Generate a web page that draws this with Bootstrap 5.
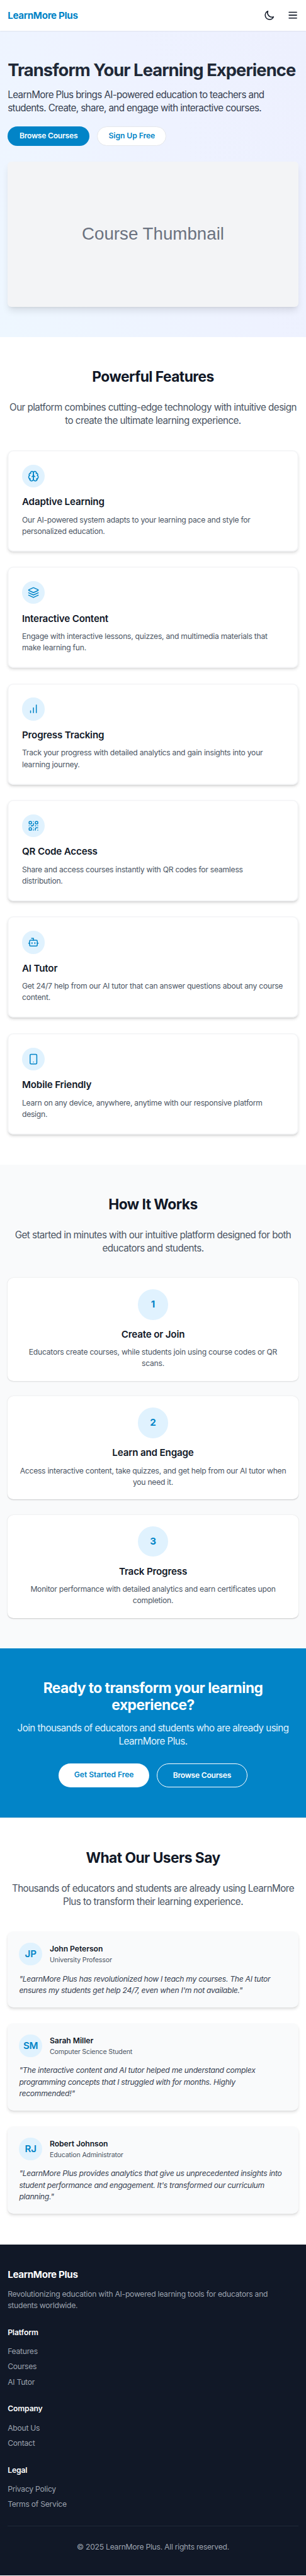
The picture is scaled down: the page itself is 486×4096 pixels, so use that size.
<!DOCTYPE html>
<html lang="en">
<head>
<meta charset="utf-8">
<meta name="viewport" content="width=device-width, initial-scale=1">
<title>LearnMore Plus</title>
<link href="https://cdn.jsdelivr.net/npm/bootstrap@5.3.0/dist/css/bootstrap.min.css" rel="stylesheet">
<style>
/* The whole page is sized in rem from this one root size */
html { font-size: 12.1588px; }
body { font-family: Inter, "Liberation Sans", sans-serif; color: #111827; background: #fff; line-height: 1.5; letter-spacing: -.021em; }
h1, h2, h3, h4, p, ul { margin: 0; }
a { text-decoration: none; }
.ico { width: 1.5rem; height: 1.5rem; fill: none; stroke: currentColor; stroke-width: 2; stroke-linecap: round; stroke-linejoin: round; display: block; }
.text-xl { font-size: 1.25rem; line-height: 1.75rem; letter-spacing: -.036em; }
.brand, .foot h3 { letter-spacing: -.022em; }
.brand { color: #0284c7; font-weight: 700; }
.topbar { height: 4rem; box-shadow: 0 .0625rem .1875rem rgba(0,0,0,.1), 0 .0625rem .125rem -.0625rem rgba(0,0,0,.1); position: relative; z-index: 1; background: #fff; }
.topbar .tools { gap: 1.5rem; }
.block { padding: 4rem 1rem; }
.hero { background: linear-gradient(65deg, #eef7ff, #eef2ff 60%, #edf0fe); }
.hero h1 { font-size: 2.25rem; line-height: 2.5rem; font-weight: 700; color: #1f2937; margin-bottom: 1rem; white-space: nowrap; letter-spacing: -.034em; }
.hero p { color: #374151; letter-spacing: -.04em; }
.pill { display: flex; justify-content: center; width: 10.6875rem; padding: .5rem 0; border-radius: 50rem; font-weight: 600; line-height: 1.5rem; white-space: nowrap; letter-spacing: -.005em; }
.pill.tight { letter-spacing: -.021em; }
.pill.narrow { width: 9.0625rem; }
.pill-lg { width: 11.8125rem; padding: .75rem 0; }
.pill-blue { background: #0284c7; color: #fff; }
.pill-white { background: #fff; color: #0284c7; }
.pill-edge { border: 1px solid #e5e7eb; padding: calc(.5625rem - 1px) 0; }
.pill-ghost { border: 1px solid #fff; color: #fff; padding: calc(.8125rem - 1px) 0; }
.thumb { height: 19rem; margin-top: 2rem; border-radius: .5rem; background: #f3f4f6; color: #6b7280; font: 2.28rem/1 "Liberation Sans", Arial, sans-serif; letter-spacing: 0; box-shadow: 0 .625rem .9375rem -.1875rem rgba(0,0,0,.1), 0 .25rem .375rem -.25rem rgba(0,0,0,.1); }
.title { font-size: 1.875rem; line-height: 2.25rem; font-weight: 700; letter-spacing: -.024em; }
.sub { color: #4b5563; margin: 2rem 0 3rem; }
.tile { border-radius: .75rem; background: #fff; padding: 1.5rem; }
.tile h3 { font-size: 1.25rem; line-height: 1.75rem; font-weight: 600; margin: 1rem 0 .75rem; letter-spacing: -.012em; }
.tile p { color: #4b5563; }
.stack { display: grid; gap: 2rem; }
.feature { padding: 1.875rem; box-shadow: inset 0 0 0 .125rem #f3f4f6, 0 .25rem .375rem -.0625rem rgba(0,0,0,.1), 0 .125rem .25rem -.125rem rgba(0,0,0,.1); }
.dot { width: 3rem; height: 3rem; border-radius: 50%; background: #e0f2fe; color: #0284c7; flex: none; display: flex; align-items: center; justify-content: center; font-size: 1.25rem; font-weight: 600; }
.dot-lg { width: 4rem; height: 4rem; font-weight: 700; }
.soft { background: #f9fafb; }
.step { box-shadow: 0 .0625rem .1875rem rgba(0,0,0,.1), 0 .0625rem .125rem -.0625rem rgba(0,0,0,.1); }
.cta { background: #0284c7; color: #fff; }
.cta p { color: #e0f2fe; margin: 1rem 0 2rem; }
.says { border-top: .0625rem solid #e5e7eb; }
.quote { background: #f9fafb; box-shadow: 0 .25rem .375rem -.0625rem rgba(0,0,0,.1), 0 .125rem .25rem -.125rem rgba(0,0,0,.1); }
.quote h4 { font-size: 1rem; line-height: 1.5rem; font-weight: 600; letter-spacing: -.004em; }
.quote .role { font-size: .875rem; line-height: 1.25rem; letter-spacing: -.015em; }
.quote .words { color: #374151; font-style: italic; letter-spacing: -.023em; }
.foot { background: #111827; color: #9ca3af; padding: 3rem 1rem; }
.foot h4 { font-size: 1rem; line-height: 1.5rem; font-weight: 600; color: #fff; margin: 2rem 0 1rem; letter-spacing: -.01em; }
.foot h3 { font-weight: 700; color: #fff; margin-bottom: 1rem; }
.foot a { color: inherit; display: block; }
.foot .links { display: grid; gap: .5rem; }
.legal { border-top: .0625rem solid #1f2937; margin-top: 2rem; padding-top: calc(2rem - .5px); }
</style>
</head>
<body>
<header class="topbar d-flex align-items-center justify-content-between px-3">
  <a href="#" class="brand text-xl">LearnMore Plus</a>
  <div class="tools d-flex align-items-center">
    <svg class="ico" viewBox="0 0 24 24"><path d="M20.354 15.354A9 9 0 018.646 3.646 9.003 9.003 0 0012 21a9.003 9.003 0 008.354-5.646z" transform="translate(-.1 0)"/></svg>
    <svg class="ico" viewBox="0 0 24 24"><path d="M4 6h16M4 12h16M4 18h16"/></svg>
  </div>
</header>

<main>
<section class="hero block">
  <h1>Transform Your Learning Experience</h1>
  <p class="text-xl mb-4">LearnMore Plus brings AI-powered education to teachers and students. Create, share, and engage with interactive courses.</p>
  <div class="d-flex gap-3">
    <a href="#" class="pill pill-blue tight">Browse Courses</a>
    <a href="#" class="pill pill-white pill-edge narrow">Sign Up Free</a>
  </div>
  <div class="thumb d-flex align-items-center justify-content-center">Course Thumbnail</div>
</section>

<section class="block">
  <div class="text-center">
    <h2 class="title">Powerful Features</h2>
    <p class="sub text-xl">Our platform combines cutting-edge technology with intuitive design to create the ultimate learning experience.</p>
  </div>
  <div class="stack">
    <div class="tile feature">
      <span class="dot"><svg class="ico" viewBox="0 0 24 24"><path d="M12 5a3 3 0 1 0-5.997.125 4 4 0 0 0-2.526 5.77 4 4 0 0 0 .556 6.588A4 4 0 1 0 12 18Z"/><path d="M12 5a3 3 0 1 1 5.997.125 4 4 0 0 1 2.526 5.77 4 4 0 0 1-.556 6.588A4 4 0 1 1 12 18Z"/><path d="M15 13a4.5 4.5 0 0 1-3-4 4.5 4.5 0 0 1-3 4M17.599 6.5a3 3 0 0 0 .399-1.375M6.003 5.125A3 3 0 0 0 6.401 6.5M3.477 10.896a4 4 0 0 1 .585-.396M19.938 10.5a4 4 0 0 1 .585.396M6 18a4 4 0 0 1-1.967-.516M19.967 17.484A4 4 0 0 1 18 18"/></svg></span>
      <h3>Adaptive Learning</h3>
      <p>Our AI-powered system adapts to your learning pace and style for personalized education.</p>
    </div>
    <div class="tile feature">
      <span class="dot"><svg class="ico" viewBox="0 0 24 24"><path d="m12.83 2.18a2 2 0 0 0-1.66 0L2.6 6.08a1 1 0 0 0 0 1.83l8.58 3.91a2 2 0 0 0 1.66 0l8.58-3.9a1 1 0 0 0 0-1.83Z"/><path d="m22 17.65-9.17 4.16a2 2 0 0 1-1.66 0L2 17.65M22 12.65l-9.17 4.16a2 2 0 0 1-1.66 0L2 12.65"/></svg></span>
      <h3>Interactive Content</h3>
      <p>Engage with interactive lessons, quizzes, and multimedia materials that make learning fun.</p>
    </div>
    <div class="tile feature">
      <span class="dot"><svg class="ico" viewBox="0 0 24 24"><path d="M12 20V10M18 20V4M6 20v-4"/></svg></span>
      <h3>Progress Tracking</h3>
      <p>Track your progress with detailed analytics and gain insights into your learning journey.</p>
    </div>
    <div class="tile feature">
      <span class="dot"><svg class="ico" viewBox="0 0 24 24"><rect x="3" y="3" width="5" height="5" rx="1"/><rect x="16" y="3" width="5" height="5" rx="1"/><rect x="3" y="16" width="5" height="5" rx="1"/><path d="M21 16h-3a2 2 0 0 0-2 2v3M21 21v.01M12 7v3a2 2 0 0 1-2 2H7M3 12h.01M12 3h.01M12 16v.01M16 12h1M21 12v.01M12 21v-1"/></svg></span>
      <h3>QR Code Access</h3>
      <p>Share and access courses instantly with QR codes for seamless distribution.</p>
    </div>
    <div class="tile feature">
      <span class="dot"><svg class="ico" viewBox="0 0 24 24"><path d="M12 8V4H8M2 14h2M20 14h2M15 13v2M9 13v2"/><rect x="4" y="8" width="16" height="12" rx="2"/></svg></span>
      <h3>AI Tutor</h3>
      <p>Get 24/7 help from our AI tutor that can answer questions about any course content.</p>
    </div>
    <div class="tile feature">
      <span class="dot"><svg class="ico" viewBox="0 0 24 24"><rect x="5" y="2" width="14" height="20" rx="2"/><path d="M12 18h.01"/></svg></span>
      <h3>Mobile Friendly</h3>
      <p>Learn on any device, anywhere, anytime with our responsive platform design.</p>
    </div>
  </div>
</section>

<section class="block soft text-center">
  <h2 class="title">How It Works</h2>
  <p class="sub text-xl">Get started in minutes with our intuitive platform designed for both educators and students.</p>
  <div class="stack">
    <div class="tile step">
      <span class="dot dot-lg mx-auto">1</span>
      <h3>Create or Join</h3>
      <p>Educators create courses, while students join using course codes or QR scans.</p>
    </div>
    <div class="tile step">
      <span class="dot dot-lg mx-auto">2</span>
      <h3>Learn and Engage</h3>
      <p>Access interactive content, take quizzes, and get help from our AI tutor when you need it.</p>
    </div>
    <div class="tile step">
      <span class="dot dot-lg mx-auto">3</span>
      <h3>Track Progress</h3>
      <p>Monitor performance with detailed analytics and earn certificates upon completion.</p>
    </div>
  </div>
</section>

<section class="block cta text-center">
  <h2 class="title">Ready to transform your learning experience?</h2>
  <p class="text-xl">Join thousands of educators and students who are already using LearnMore Plus.</p>
  <div class="d-flex gap-3 justify-content-center">
    <a href="#" class="pill pill-lg pill-white">Get Started Free</a>
    <a href="#" class="pill pill-lg pill-ghost tight">Browse Courses</a>
  </div>
</section>

<section class="block says">
  <div class="text-center">
    <h2 class="title">What Our Users Say</h2>
    <p class="sub text-xl">Thousands of educators and students are already using LearnMore Plus to transform their learning experience.</p>
  </div>
  <div class="stack">
    <div class="tile quote">
      <div class="d-flex align-items-center gap-3 mb-3">
        <span class="dot">JP</span>
        <div><h4>John Peterson</h4><p class="role">University Professor</p></div>
      </div>
      <p class="words">"LearnMore Plus has revolutionized how I teach my courses. The AI tutor ensures my students get help 24/7, even when I'm not available."</p>
    </div>
    <div class="tile quote">
      <div class="d-flex align-items-center gap-3 mb-3">
        <span class="dot">SM</span>
        <div><h4>Sarah Miller</h4><p class="role">Computer Science Student</p></div>
      </div>
      <p class="words">"The interactive content and AI tutor helped me understand complex programming concepts that I struggled with for months. Highly recommended!"</p>
    </div>
    <div class="tile quote">
      <div class="d-flex align-items-center gap-3 mb-3">
        <span class="dot">RJ</span>
        <div><h4>Robert Johnson</h4><p class="role">Education Administrator</p></div>
      </div>
      <p class="words">"LearnMore Plus provides analytics that give us unprecedented insights into student performance and engagement. It's transformed our curriculum planning."</p>
    </div>
  </div>
</section>
</main>

<footer class="foot">
  <h3 class="text-xl">LearnMore Plus</h3>
  <p>Revolutionizing education with AI-powered learning tools for educators and students worldwide.</p>
  <h4>Platform</h4>
  <div class="links"><a href="#">Features</a><a href="#">Courses</a><a href="#">AI Tutor</a></div>
  <h4>Company</h4>
  <div class="links"><a href="#">About Us</a><a href="#">Contact</a></div>
  <h4>Legal</h4>
  <div class="links"><a href="#">Privacy Policy</a><a href="#">Terms of Service</a></div>
  <p class="legal text-center">© 2025 LearnMore Plus. All rights reserved.</p>
</footer>
<script src="https://cdn.jsdelivr.net/npm/bootstrap@5.3.0/dist/js/bootstrap.bundle.min.js"></script>
</body>
</html>
